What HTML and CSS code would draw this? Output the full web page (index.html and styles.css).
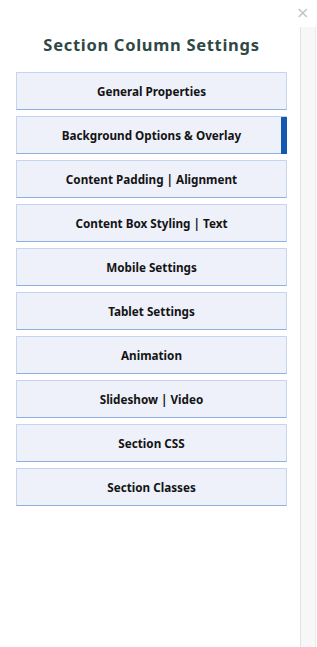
FILE: index.html
```html
<!DOCTYPE html>
<html lang="en">
<head>
    <meta charset="UTF-8">
    <meta name="viewport" content="width=device-width, initial-scale=1.0">
    <title>Section Column Settings</title>
    <link rel="stylesheet" href="styles.css">
</head>
<body>
    <div class="modal">
        <div class="panel">
            <h1 class="title">Section Column Settings</h1>
            <div class="menu">
                <div class="menu-item">General Properties</div>
                <div class="menu-item active">Background Options &amp; Overlay</div>
                <div class="menu-item">Content Padding | Alignment</div>
                <div class="menu-item">Content Box Styling | Text</div>
                <div class="menu-item">Mobile Settings</div>
                <div class="menu-item">Tablet Settings</div>
                <div class="menu-item">Animation</div>
                <div class="menu-item">Slideshow | Video</div>
                <div class="menu-item">Section CSS</div>
                <div class="menu-item">Section Classes</div>
            </div>
        </div>
        <div class="side">
            <div class="close">&times;</div>
            <div class="scrollbar"></div>
        </div>
    </div>
</body>
</html>
```

FILE: styles.css
```css
body {
    margin: 0;
    background-color: #ffffff;
    font-family: "Noto Sans", "Open Sans", sans-serif;
}

.modal {
    display: flex;
    height: 647px;
}

.panel {
    width: 271px;
    padding: 0 13px 0 16px;
}

.title {
    margin: 35px 0 0 0;
    text-align: center;
    font-size: 16.5px;
    font-weight: 700;
    letter-spacing: 0.7px;
    color: #2e4846;
    line-height: 20px;
}

.menu {
    display: flex;
    flex-direction: column;
    gap: 6px;
    margin-top: 17px;
}

.menu-item {
    position: relative;
    height: 36px;
    line-height: 37px;
    text-align: center;
    font-size: 11.7px;
    font-weight: 700;
    color: #141414;
    background-color: #eef1f9;
    border: 1px solid #c5d4ef;
    border-bottom-color: #8eb0e2;
}

/* Selected tab marker */
.menu-item.active::after {
    content: "";
    position: absolute;
    top: 0;
    right: -1px;
    width: 6px;
    height: 37px;
    background-color: #1558b0;
}

.side {
    width: 17px;
    display: flex;
    flex-direction: column;
}

.close {
    height: 27px;
    line-height: 26px;
    margin-left: -4px;
    font-size: 16px;
    color: #c4c4c4;
    font-family: "DejaVu Sans", sans-serif;
}

.scrollbar {
    flex: 1;
    width: 14px;
    background-color: #f7f7f7;
    border-left: 1px solid #e3e3e3;
    border-right: 1px solid #ededed;
}
```
